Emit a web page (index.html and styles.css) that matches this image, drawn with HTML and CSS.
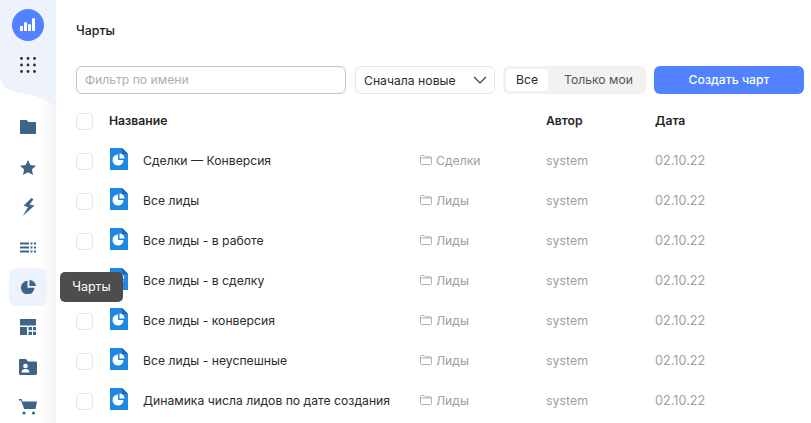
FILE: index.html
```html
<!DOCTYPE html>
<html lang="ru">
<head>
<meta charset="utf-8">
<title>Чарты</title>
<link rel="stylesheet" href="styles.css">
</head>
<body>
<div class="app">
  <aside class="sidebar">
    <div class="sidebar-top">
      <svg class="top-bg" viewBox="0 0 56 106" preserveAspectRatio="none"><path d="M0 0H56V106C42 96 28 94 16 92C6 90 0 85 0 74Z" fill="#eef2fd"/></svg>
      <div class="logo">
        <svg width="32" height="32" viewBox="0 0 32 32"><circle cx="16" cy="16" r="16" fill="#5282ff"/><path d="M8 17h3v5H8zM12 13.300h3V22h-3zM16 15.300h3V22h-3zM20 9.300h3V22h-3z" fill="#fff"/></svg>
      </div>
      <div class="apps">
        <svg width="16" height="16" viewBox="0 0 16 16" fill="#2b2f3a"><circle cx="1.500" cy="1.500" r="1.400"/><circle cx="8" cy="1.500" r="1.400"/><circle cx="14.500" cy="1.500" r="1.400"/><circle cx="1.500" cy="8" r="1.400"/><circle cx="8" cy="8" r="1.400"/><circle cx="14.500" cy="8" r="1.400"/><circle cx="1.500" cy="14.500" r="1.400"/><circle cx="8" cy="14.500" r="1.400"/><circle cx="14.500" cy="14.500" r="1.400"/></svg>
      </div>
    </div>
    <nav class="nav">
      <div class="nav-item"><svg width="16" height="14" viewBox="0 0 16 14" fill="#3e6487"><path d="M0 1C0 .4.400 0 1 0h5.500l2 2H15c.6 0 1 .4 1 1v10c0 .6-.4 1-1 1H1c-.6 0-1-.4-1-1Z"/></svg></div>
      <div class="nav-item"><svg width="16" height="15" viewBox="0 0 16 15" fill="#3e6487"><path d="M8 0l2.400 5 5.600.7-4.100 3.800 1.100 5.500L8 12.300 3 15l1.100-5.500L0 5.700 5.600 5z"/></svg></div>
      <div class="nav-item"><svg width="13" height="18" viewBox="0 0 13 18" fill="#3e6487"><path d="M9.500 0L1.500 7.800 6 9 .8 18 12.500 7.500 7.600 6.400 11.500 1.200Z"/></svg></div>
      <div class="nav-item"><svg width="16" height="11" viewBox="0 0 16 11" fill="#3e6487"><path d="M0 .5h9v2H0zM0 4.500h9v2H0zM0 8.500h9v2H0zM10.500 .5h2v2h-2zM14 .5h2v2h-2zM10.500 4.500h2v2h-2zM14 4.500h2v2h-2zM10.500 8.500h2v2h-2zM14 8.500h2v2h-2z"/></svg></div>
      <div class="nav-item nav-item-active"><svg width="15" height="14" viewBox="0 0 15 14" fill="#3e6487"><path d="M6.500.8v7h7A6.800 6.800 0 1 1 6.500.8z"/><path d="M8.500 0A6.500 6.500 0 0 1 15 6H8.500z"/></svg></div>
      <div class="nav-item"><svg width="16" height="16" viewBox="0 0 16 16" fill="#3e6487"><path d="M0 0h16v6.500H0zM0 8h7v8H0zM8.500 8H12v3.300H8.500zM13 8h3v3.300h-3zM8.500 12.700H12V16H8.500zM13 12.700h3V16h-3z"/></svg></div>
      <div class="nav-item"><svg width="18" height="16" viewBox="0 0 18 16"><path fill="#3e6487" d="M0 1.200C0 .5.500 0 1.200 0H7l2 2.500h7.800c.7 0 1.200.5 1.200 1.200v11.100c0 .7-.5 1.200-1.200 1.200H1.200C.5 16 0 15.500 0 14.800Z"/><circle cx="6.500" cy="7" r="2.300" fill="#fff"/><path fill="#fff" d="M2.500 13.500c0-2.400 1.800-3.500 4-3.500s4 1.100 4 3.500z"/></svg></div>
      <div class="nav-item"><svg width="18" height="16" viewBox="0 0 18 16" fill="#3e6487"><path d="M0 0h2.600l.8 2.500H18l-1.500 7.500H5.200L2 1.500H0z"/><circle cx="5" cy="14" r="1.600"/><circle cx="14.500" cy="14" r="1.600"/></svg></div>
    </nav>
  </aside>

  <main class="main">
    <h1 class="title">Чарты</h1>
    <div class="toolbar">
      <div class="filter">Фильтр по имени</div>
      <div class="sort"><span>Сначала новые</span><svg width="14" height="8" viewBox="0 0 14 8" fill="none" stroke="#333" stroke-width="1.100"><path d="M1 1l6 6 6-6"/></svg></div>
      <div class="tabs"><span class="tab tab-active">Все</span><span class="tab">Только мои</span></div>
      <div class="create">Создать чарт</div>
    </div>

    <div class="row head">
      <span class="check"></span>
      <span class="col-name">Название</span>
      <span class="col-author">Автор</span>
      <span class="col-date">Дата</span>
    </div>

    <div class="row">
      <span class="check"></span>
      <svg class="file" viewBox="0 0 18 22"><use href="#file"/></svg>
      <span class="name">Сделки — Конверсия</span>
      <span class="folder"><svg class="fold" viewBox="0 0 12 10"><use href="#fold"/></svg>Сделки</span>
      <span class="author">system</span>
      <span class="date">02.10.22</span>
    </div>
    <div class="row">
      <span class="check"></span>
      <svg class="file" viewBox="0 0 18 22"><use href="#file"/></svg>
      <span class="name">Все лиды</span>
      <span class="folder"><svg class="fold" viewBox="0 0 12 10"><use href="#fold"/></svg>Лиды</span>
      <span class="author">system</span>
      <span class="date">02.10.22</span>
    </div>
    <div class="row">
      <span class="check"></span>
      <svg class="file" viewBox="0 0 18 22"><use href="#file"/></svg>
      <span class="name">Все лиды - в работе</span>
      <span class="folder"><svg class="fold" viewBox="0 0 12 10"><use href="#fold"/></svg>Лиды</span>
      <span class="author">system</span>
      <span class="date">02.10.22</span>
    </div>
    <div class="row">
      <span class="check"></span>
      <svg class="file" viewBox="0 0 18 22"><use href="#file"/></svg>
      <span class="name">Все лиды - в сделку</span>
      <span class="folder"><svg class="fold" viewBox="0 0 12 10"><use href="#fold"/></svg>Лиды</span>
      <span class="author">system</span>
      <span class="date">02.10.22</span>
    </div>
    <div class="row">
      <span class="check"></span>
      <svg class="file" viewBox="0 0 18 22"><use href="#file"/></svg>
      <span class="name">Все лиды - конверсия</span>
      <span class="folder"><svg class="fold" viewBox="0 0 12 10"><use href="#fold"/></svg>Лиды</span>
      <span class="author">system</span>
      <span class="date">02.10.22</span>
    </div>
    <div class="row">
      <span class="check"></span>
      <svg class="file" viewBox="0 0 18 22"><use href="#file"/></svg>
      <span class="name">Все лиды - неуспешные</span>
      <span class="folder"><svg class="fold" viewBox="0 0 12 10"><use href="#fold"/></svg>Лиды</span>
      <span class="author">system</span>
      <span class="date">02.10.22</span>
    </div>
    <div class="row">
      <span class="check"></span>
      <svg class="file" viewBox="0 0 18 22"><use href="#file"/></svg>
      <span class="name">Динамика числа лидов по дате создания</span>
      <span class="folder"><svg class="fold" viewBox="0 0 12 10"><use href="#fold"/></svg>Лиды</span>
      <span class="author">system</span>
      <span class="date">02.10.22</span>
    </div>
  </main>

  <div class="tooltip">Чарты</div>
</div>

<svg class="defs" width="0" height="0">
  <symbol id="file" viewBox="0 0 18 22">
    <path d="M0 0h12l6 6v16H0z" fill="#1e88e5"/>
    <path d="M12 0l6 6h-6z" fill="#1565c0"/>
    <path d="M8 6.500v5.500h5.500A5.500 5.500 0 1 1 8 6.500z" fill="#fff"/>
    <path d="M9.500 5.500A5 5 0 0 1 14.500 10.500H9.500z" fill="#fff"/>
  </symbol>
  <symbol id="fold" viewBox="0 0 12 10">
    <path d="M.5 1.500C.5 1 1 .5 1.500.5H4l1.200 1.300h5.300c.6 0 1 .4 1 1v5.700c0 .6-.4 1-1 1h-9c-.6 0-1-.4-1-1zM.5 3h11" fill="none" stroke="#a8a8a8" stroke-width=".9"/>
  </symbol>
</svg>
</body>
</html>
```

FILE: styles.css
```css
* { box-sizing: border-box; }
html, body { margin: 0; height: 100%; overflow: hidden; background: #fff; }
body { font-family: Inter, "Noto Sans", sans-serif; font-size: 12.2px; color: #2b2b2b; }
.app { position: relative; display: flex; width: 811px; height: 423px; overflow: hidden; }
.defs { position: absolute; }

.sidebar { width: 56px; flex: none; height: 423px; overflow: hidden; background: linear-gradient(90deg, #fff 72%, #f3f3f5 100%); }
.sidebar-top { position: relative; height: 107px; display: flex; flex-direction: column; align-items: center; padding-top: 9px; }
.top-bg { position: absolute; left: 0; top: 0; width: 56px; height: 106px; }
.logo, .apps { position: relative; display: flex; }
.logo { height: 32px; }
.apps { margin-top: 16px; }
.nav { display: flex; flex-direction: column; align-items: center; padding-top: 1px; }
.nav-item { width: 38px; height: 38px; margin-bottom: 2px; display: flex; align-items: center; justify-content: center; border-radius: 8px; flex: none; }
.nav-item-active { background: #eef2fd; }

.main { flex: 1; padding: 0 7px 0 20px; min-width: 0; }
.title { margin: 0; padding-top: 23px; height: 66px; font-size: 12.4px; line-height: 16px; font-weight: 500; color: #222; }

.toolbar { display: flex; height: 28px; margin-bottom: 6px; }
.filter { width: 270px; height: 28px; border: 1px solid #c4c4c4; border-radius: 6px; padding: 0 8px; line-height: 26px; color: #b0b0b0; }
.sort { width: 140px; height: 28px; margin-left: 9px; border: 1px solid #e6e6e6; border-radius: 6px; padding: 0 7px 0 8px; display: flex; align-items: center; justify-content: space-between; }
.tabs { width: 143px; height: 28px; margin-left: 8px; background: #f2f2f2; border-radius: 6px; padding: 3px; display: flex; }
.tab { height: 22px; line-height: 22px; padding: 0 10px; color: #555; }
.tab + .tab { padding: 0 0 0 16px; }
.tab-active { background: #fff; border-radius: 4px; color: #2b2b2b; width: 42px; }
.create { width: 150px; height: 28px; margin-left: 8px; background: #5282ff; border-radius: 6px; color: #fff; text-align: center; line-height: 28px; font-weight: 500; }

.row { position: relative; display: flex; align-items: center; height: 40px; }
.head { font-weight: 600; color: #262626; }
.check { width: 17px; height: 17px; flex: none; margin-top: 3px; border: 1px solid #e2e2e2; border-radius: 5px; background: #fff; }
.file { width: 18px; height: 22px; flex: none; margin: 0 0 2px 17px; }
.name { width: 277px; flex: none; margin-left: 15px; white-space: nowrap; }
.folder { width: 126px; flex: none; display: flex; align-items: center; color: #a0a0a0; }
.fold { width: 12px; height: 10px; margin-right: 4px; }
.author { width: 109px; flex: none; color: #a0a0a0; font-size: 12.4px; }
.date { color: #a0a0a0; font-size: 12.7px; }
.col-name { width: 437px; flex: none; margin-left: 16px; }
.col-author { width: 109px; flex: none; }

.tooltip { position: absolute; left: 60px; top: 272px; width: 63px; height: 30px; background: #4d4d4d; border-radius: 5px; color: #fff; font-size: 12.5px; line-height: 30px; text-align: center; }
```
